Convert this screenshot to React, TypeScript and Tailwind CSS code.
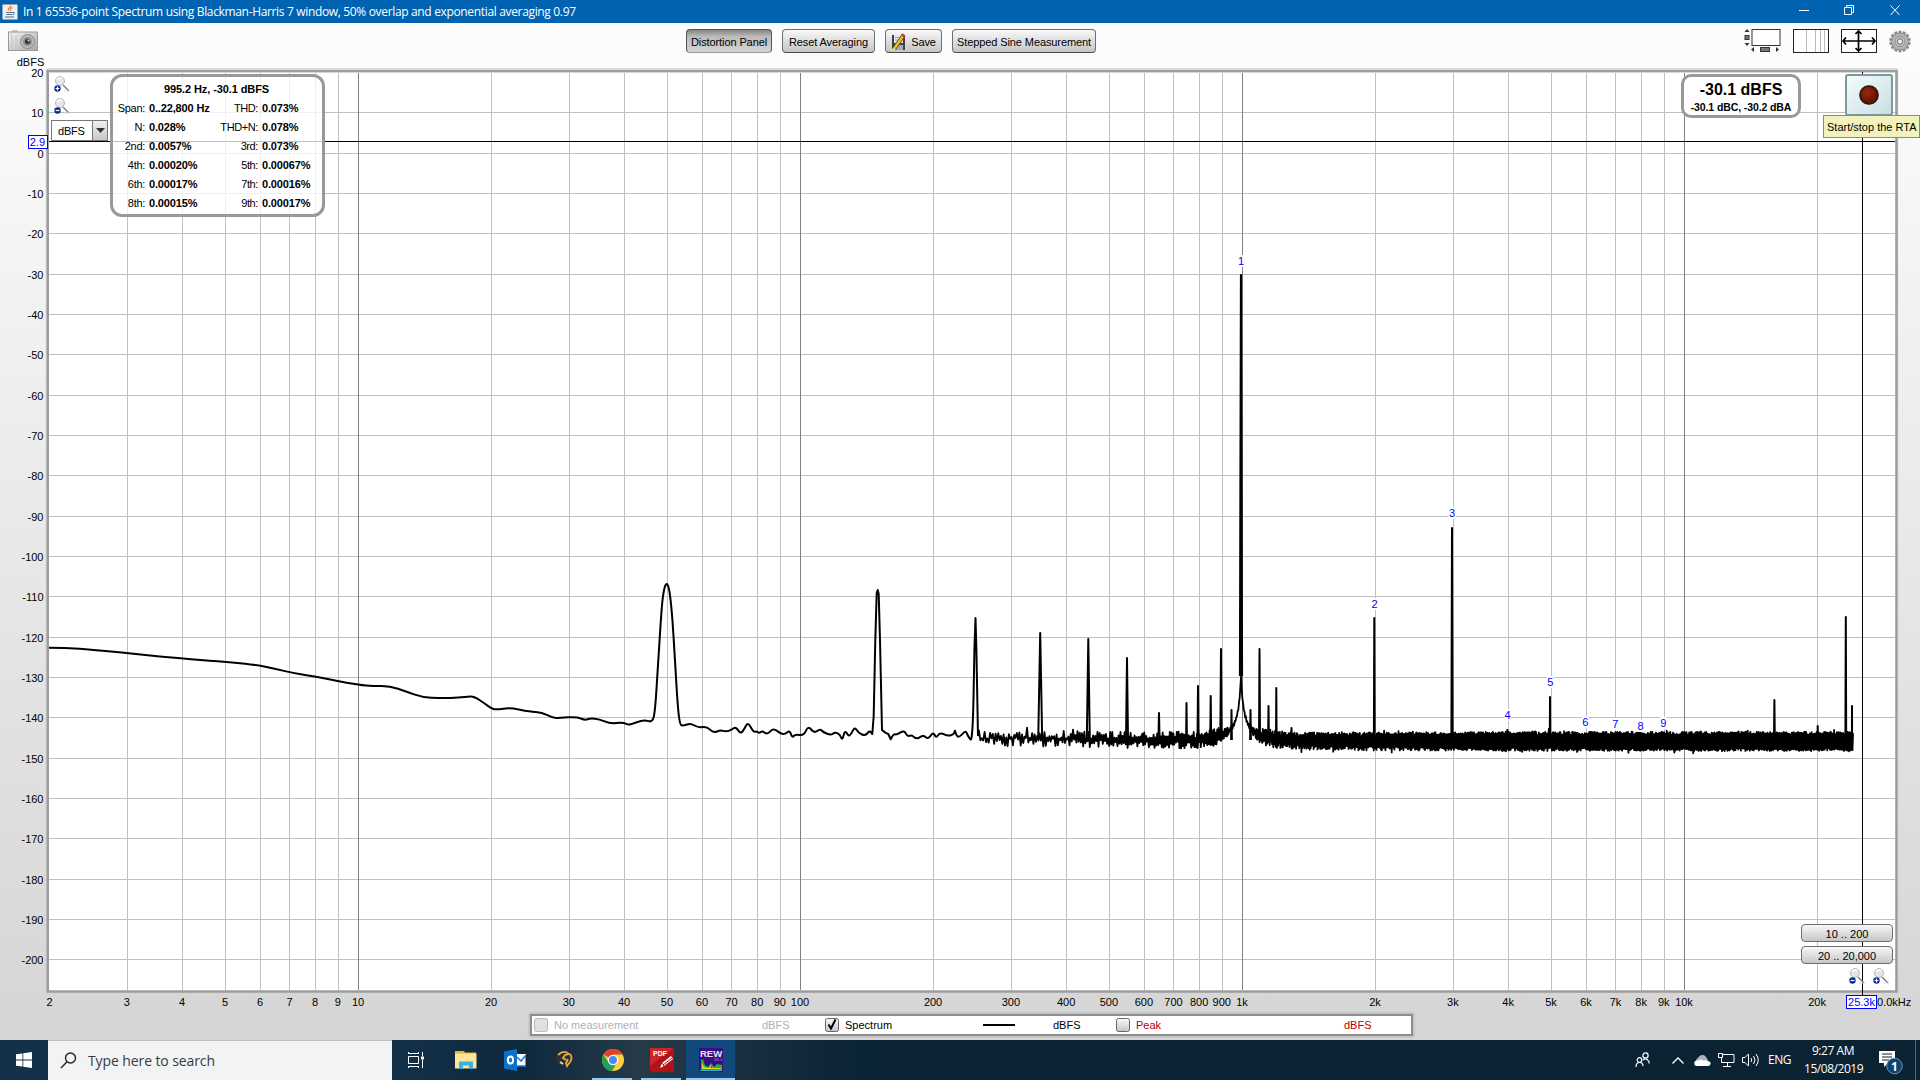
import React from 'react';

// Plot area in page pixels (the chart svg starts at y = 54)
const LEFT = 49;
const RIGHT = 1895;
const TOP = 72;
const BOTTOM = 990;
const DECADE = 442;

const freqToX = (f: number) => 358.3 + DECADE * (Math.log10(f) - 1);
const dbToY = (db: number) => 153.1 - db * 4.033;

const LOW_END: [number, number][] = [
  [49, 647.8], [66, 648], [83, 649], [122, 652.5], [159, 656.5], [202, 660.2], [233, 662.5], [257, 665], [276, 669],
  [294, 673.3], [316, 676.5], [337, 681], [359, 684.8], [373, 686], [390, 686], [406, 691.5], [422, 697.3],
  [441, 698], [459, 697.8], [470, 696.4], [475, 697], [484, 703], [491.7, 708.7], [496.7, 709.7], [510, 707.7],
  [530, 711.7], [541.7, 712.3], [553.3, 718], [560, 718], [576.7, 716.7], [585, 720.3], [590, 718.3], [599.3, 719],
  [610, 723.7], [623.3, 722.3], [629, 725.3], [636.7, 722], [645, 720], [652, 722.3], [655, 713.3], [658.3, 660],
  [661.7, 606.7], [663.5, 592], [665.2, 585.3], [666.7, 583.8], [668.2, 585.3], [670, 594], [672.3, 616.7],
  [675, 660], [677.7, 706.7], [680, 725],
  [683.3, 725.7], [690.7, 723.3], [698.3, 727.7], [706.7, 726.3], [713.3, 733], [720.7, 730], [725.7, 731.7],
  [731.7, 730], [735.7, 726.7], [740.7, 734], [744, 729.3], [748, 722], [753.3, 732], [756.7, 731.3], [759.3, 733.3],
  [762.3, 730.7], [767.3, 734.7], [773.3, 728], [780.7, 733.7], [785, 734.3], [789.7, 730.3], [792.3, 738],
  [795, 734.3], [804, 735.7], [808, 725.7], [814.3, 733.3], [820, 728.7], [823.3, 732.3], [831, 735.3], [834.7, 732],
  [840, 734.3], [842.3, 740.7], [845, 730], [848.3, 736], [851, 734.7], [854.7, 726.7], [858.3, 733], [865.7, 736],
  [869.3, 730.3], [872.3, 734], [873.7, 716], [875.3, 640], [876.7, 593], [877.7, 590], [878.7, 594], [880, 640],
  [882, 730], [885, 732.7], [888.3, 734], [890.7, 739.3], [893.3, 734], [896.7, 734.7], [904.3, 730], [907.3, 736.7],
  [911.7, 735], [916.7, 739.3], [923.3, 735], [928.3, 739.3], [933.3, 731.7], [936, 738.3], [940, 732.3],
  [947.3, 736], [953.3, 735], [955, 730.7], [956.7, 737.3], [961, 736], [965.7, 730], [968.3, 737.3], [972.7, 741.7],
  [974.4, 650], [975.5, 618], [976.4, 650], [978, 736],
];

// x, top, half width at the base
const PEAKS: [number, number, number][] = [
  [1040.2, 633, 2], [1088.3, 639, 1.5], [1127, 658, 1], [1159, 713, 0.6], [1186.5, 703, 0.4], [1198, 686, 0.5],
  [1210.7, 696, 0.5], [1221, 649, 0.7], [1231.5, 710, 0.4], [1250.5, 710, 0.4], [1259.5, 649, 0.5], [1268.5, 706, 0.4],
  [1276.3, 688, 0.3], [1291.5, 728, 0.4], [1374.3, 618, 0.4], [1452, 528, 0.6], [1507.3, 730, 0.2], [1550, 697, 0.2],
  [1774.4, 700, 0.4], [1817.7, 726, 0.2], [1845.8, 617, 0.4], [1852, 706, 0.1],
];

const HARMONICS: [string, number, number][] = [
  ['1', 1241, 261], ['2', 1374.5, 604], ['3', 1452, 513], ['4', 1507.5, 715], ['5', 1550.3, 682], ['6', 1585.3, 722],
  ['7', 1615.3, 724], ['8', 1640.5, 726], ['9', 1663.3, 723],
];

function smoothPath(pts: [number, number][]) {
  let d = `M${pts[0][0]} ${pts[0][1]}`;
  for (let i = 1; i < pts.length - 1; i++) {
    const mx = (pts[i][0] + pts[i + 1][0]) / 2;
    const my = (pts[i][1] + pts[i + 1][1]) / 2;
    const tight = pts[i][0] > 870 && pts[i + 1][0] - pts[i - 1][0] < 6;
    d += tight ? `L${pts[i][0]} ${pts[i][1]}` : `Q${pts[i][0]} ${pts[i][1]} ${mx} ${my}`;
  }
  const last = pts[pts.length - 1];
  return `${d}L${last[0]} ${last[1]}`;
}

function noisePath() {
  let seed = 4711;
  const rand = () => {
    seed = (seed * 16807) % 2147483647;
    return seed / 2147483647;
  };
  let d = 'M978 736';
  let up = true;
  let x = 979;
  while (x < 1853) {
    const t = Math.min(1, (x - 979) / 700);
    const dist = Math.abs(x - 1241);
    const skirt = Math.max(0, 70 / (1 + 0.35 * dist) - 4);
    const center = 738.3 + 3 * Math.min(1, t * 1.8) - skirt;
    const amp = Math.min(8 + 1.6 * Math.min(1, t * 1.3), 0.6 + dist * 0.35);
    const spread = 1.15 - 0.8 * Math.min(1, t * 1.5);
    let off = amp * (1 - spread * rand());
    if (rand() > 0.95 && dist > 12) off += 3 * rand();
    d += `L${x.toFixed(1)} ${(center + (up ? -off : off)).toFixed(1)}`;
    up = !up;
    x += 1.4 - 0.95 * Math.min(1, t * 2);
  }
  return d;
}

const LOW_PATH = smoothPath(LOW_END);
const NOISE_PATH = noisePath();

const X_TICKS: number[] = [];
[1, 10, 100, 1000, 10000].forEach((base) => {
  for (let n = 1; n < 10; n++) {
    const f = base * n;
    if (f > 2 && f <= 20000) X_TICKS.push(f);
  }
});
const Y_TICKS = Array.from({ length: 23 }, (_, i) => 20 - i * 10);

const tickLabel = (f: number) => (f >= 1000 ? `${f / 1000}k` : `${f}`);

const Chart: React.FC = () => (
  <svg
    width="1920"
    height="957"
    viewBox="0 54 1920 957"
    className="block font-['Liberation_Sans'] text-[11px]"
  >
    {/* Bevelled frame */}
    <rect x="46.5" y="69" width="1851" height="923.5" rx="2" fill="none" stroke="#d0d0d0" strokeWidth="1.5" />
    <rect x="47.8" y="71.2" width="1848.600" height="920.3" fill="#fff" stroke="#9c9c9c" strokeWidth="2.4" />
    <g shapeRendering="crispEdges">
      {Y_TICKS.slice(1).map((db) => (
        <rect key={db} x={LEFT} y={Math.floor(dbToY(db))} width={RIGHT - LEFT} height="1" fill="#bfbfbf" />
      ))}
      {X_TICKS.map((f) => (
        <rect
          key={f}
          x={Math.floor(freqToX(f))}
          y={TOP + 1}
          width="1"
          height={BOTTOM - TOP - 1}
          fill={[10, 100, 1000, 10000].includes(f) ? '#808080' : '#bfbfbf'}
        />
      ))}
      {/* Cursor */}
      <rect x={LEFT} y="141" width={RIGHT - LEFT} height="1" fill="#000" />
      <rect x="1862" y={TOP} width="1" height="923" fill="#000" />
    </g>

    <g fill="none" stroke="#000" strokeWidth="2" strokeLinejoin="round">
      <path d={LOW_PATH} />
      <path d={NOISE_PATH} strokeWidth="1.8" />
      {PEAKS.map(([x, y, w]) => (
        <path key={x} d={`M${x - w} 740L${x} ${y}L${x + w} 740`} />
      ))}
      <path d="M1240 676L1241 275L1242 676" strokeWidth="2.2" />
    </g>

    {HARMONICS.map(([n, x, y]) => (
      <g key={n}>
        <rect x={x - 3.5} y={y - 6} width="7" height="12" fill="#fff" />
        <text x={x} y={y + 4} textAnchor="middle" fill="#0000ff">{n}</text>
      </g>
    ))}

    <text x="30.5" y="66" textAnchor="middle">dBFS</text>
    {Y_TICKS.map((db) => (
      <text key={db} x="43.5" y={dbToY(db) + 4.5} textAnchor="end">{db}</text>
    ))}
    <text x="49.5" y="1006" textAnchor="middle">2</text>
    {X_TICKS.map((f) => (
      <text key={f} x={freqToX(f) - 0.3} y="1006" textAnchor="middle">{tickLabel(f)}</text>
    ))}
    <text x="1877" y="1006">0.0kHz</text>
    <rect x="28.5" y="135.5" width="19" height="13" fill="#fff" stroke="#0000ff" />
    <text x="37.5" y="146" textAnchor="middle" fill="#0000ff">2.9</text>
    <rect x="1846.5" y="995.5" width="30" height="13" fill="#fff" stroke="#0000ff" />
    <text x="1861.5" y="1006" textAnchor="middle" fill="#0000ff">25.3k</text>
  </svg>
);

const Magnifier: React.FC<{ plus?: boolean }> = ({ plus }) => (
  <svg width="16" height="16" viewBox="0 0 16 16">
    <path d="M9 9l6 6" stroke="#777" strokeWidth="1.2" />
    <path d="M10 15h6" stroke="#ddd" strokeWidth="1" />
    <circle cx="6" cy="5" r="4.5" fill="#e6e6ea" stroke="#b8b8bc" />
    <path d="M3 4a3.5 3.5 0 0 1 5-1.5" stroke="#fff" strokeWidth="1.5" fill="none" />
    <circle cx="3.5" cy="12.5" r="3.2" fill="#00308f" />
    <path d={plus ? 'M1.6 12.5h3.8M3.5 10.6v3.8' : 'M1.6 12.5h3.8'} stroke="#fff" strokeWidth="1.2" />
  </svg>
);

const JavaIcon: React.FC = () => (
  <svg width="16" height="16" viewBox="0 0 16 16">
    <rect x=".5" y=".5" width="15" height="15" rx="1" fill="#eef0f2" stroke="#9aa4ae" />
    <path d="M8.5 1.5c1 2-3.5 2.5-2 5M10.5 3.5c-2 1-3 1.5-2 3.5" stroke="#e77a22" strokeWidth="1.2" fill="none" />
    <path d="M4 8.5h7M4.5 10.5h6M3 13h9M11 8.5c2-.5 2 1.5 0 2.2" stroke="#4a7597" fill="none" />
  </svg>
);

const CameraIcon: React.FC = () => (
  <svg width="31" height="22" viewBox="0 0 31 22">
    <defs>
      <linearGradient id="cam" x1="0" y1="0" x2="1" y2="1">
        <stop offset="0" stopColor="#f4f4f4" />
        <stop offset="1" stopColor="#a8a8a8" />
      </linearGradient>
    </defs>
    <rect x="4" y="0" width="6" height="3" fill="#ccc" />
    <rect x=".5" y="2" width="29" height="18.5" fill="url(#cam)" stroke="#999" />
    <path d="M3 3q3 9 0 16M8 5v10" stroke="#c4c4c4" fill="none" />
    <circle cx="19.5" cy="11.5" r="7" fill="#bbb" stroke="#888" />
    <circle cx="19.5" cy="11.5" r="4.5" fill="#8a8a8a" />
    <circle cx="19.5" cy="11.5" r="2.5" fill="#333" />
    <circle cx="20.5" cy="10.5" r="1" fill="#ddd" />
  </svg>
);

const SaveIcon: React.FC = () => (
  <svg width="16" height="20" viewBox="0 0 16 20">
    <path d="M1 3h13v15H3l-2-2z" fill="#3c4248" />
    <rect x="3" y="3" width="9" height="8" fill="#dfe8ee" />
    <path d="M4 5.5h7M4 8h7" stroke="#9ab" />
    <rect x="5" y="13" width="7" height="5" fill="#aab" />
    <path d="M3 17L12 4" stroke="#6b4a00" strokeWidth="4" />
    <path d="M3 17L12 4" stroke="#f0c020" strokeWidth="2.4" />
    <path d="M11.5 4.5l1.5-2" stroke="#e03030" strokeWidth="4" />
    <path d="M1.500 19l1-3 2 1.5z" fill="#eed" />
  </svg>
);

const GearIcon: React.FC = () => (
  <svg width="22" height="23" viewBox="-11 -11.5 22 23">
    {Array.from({ length: 14 }, (_, i) => (
      <rect key={i} x="-1.5" y="-10.8" width="3" height="4" fill="#8f8f8f" transform={`rotate(${(i * 360) / 14})`} />
    ))}
    <circle r="8.6" fill="#b4b4b4" stroke="#888" />
    <circle r="5" fill="#c9c9c9" stroke="#8d8d8d" />
    <circle r="2.6" fill="#f4f4f4" stroke="#808080" strokeWidth="1.2" />
  </svg>
);

const btn =
  'flex h-6 items-center justify-center rounded-[4px] border border-[#6e6e6e] border-b-[#4a4a4a] bg-gradient-to-b from-[#f8f8f8] to-[#c6c6c6] pt-[2px] tracking-[-0.1px] whitespace-nowrap';

const Toolbar: React.FC = () => (
  <div className="flex h-[31px] items-start pt-[6px]">
    <div className="w-[686px] pt-px pl-2"><CameraIcon /></div>
    <div className="flex gap-[10px]">
      <div className="flex h-6 w-[86px] items-center justify-center rounded-[4px] border border-[#555] border-b-[#999] bg-gradient-to-b from-[#858585] via-[#bcbcbc] via-30% to-[#d4d4d4] pt-[2px] tracking-[-0.1px] whitespace-nowrap">
        Distortion Panel
      </div>
      <div className={`${btn} w-[93px]`}>Reset Averaging</div>
      <div className={`${btn} w-[57px] gap-1`}><SaveIcon />Save</div>
      <div className={`${btn} w-[144px]`}>Stepped Sine Measurement</div>
    </div>
    <div className="ml-auto flex items-start gap-3 pr-[9px]">
      <svg width="37" height="24" viewBox="0 0 37 24">
        <rect x="8" y=".5" width="28" height="16" fill="#fff" stroke="#333" />
        <rect x="1" y="6.5" width="4" height="4" fill="#777" stroke="#333" />
        <path d="M.5 3h5L3 0zM.5 14h5L3 17zM7 20.5l3-2.5v5zM35 20.5l-3-2.5v5z" fill="#333" />
        <rect x="16.5" y="18.5" width="9" height="4" fill="#777" stroke="#333" />
      </svg>
      <svg width="36" height="24" viewBox="0 0 36 24">
        <rect x=".5" y=".5" width="35" height="23" fill="#fff" stroke="#222" />
        <path d="M13.5 1v22M22.5 1v22M27.5 1v22M31.5 1v22" stroke="#bbb" />
      </svg>
      <svg width="36" height="24" viewBox="0 0 36 24">
        <rect x=".5" y=".5" width="35" height="23" fill="#fff" stroke="#222" />
        <path d="M2 12h32M17.5 2v20M5 8.5L2 12l3 3.5M31 8.5l3 3.5-3 3.5M14.5 5l3-3 3 3M14.5 19l3 3 3-3" stroke="#000" strokeWidth="1.7" fill="none" />
      </svg>
      <div className="pt-px"><GearIcon /></div>
    </div>
  </div>
);

const DISTORTION = [
  ['Span:', '0..22,800 Hz', 'THD:', '0.073%'],
  ['N:', '0.028%', 'THD+N:', '0.078%'],
  ['2nd:', '0.0057%', '3rd:', '0.073%'],
  ['4th:', '0.00020%', '5th:', '0.00067%'],
  ['6th:', '0.00017%', '7th:', '0.00016%'],
  ['8th:', '0.00015%', '9th:', '0.00017%'],
];

const DistortionPanel: React.FC = () => (
  <div className="absolute top-[51px] left-[110px] h-[143px] w-[215px] rounded-[12px] border-[3px] border-[#999] bg-white/75 pt-[3px]">
    <div className="h-[19px] pr-[2px] text-center leading-[19px] font-bold tracking-[-0.1px]">995.2 Hz, -30.1 dBFS</div>
    {DISTORTION.map((row) => (
      <div key={row[0]} className="grid h-[19px] grid-cols-[32px_54px_51px_56px] gap-x-1 leading-[19px] tracking-[-0.15px] whitespace-nowrap">
        <span className="flex justify-end tracking-[-0.3px]">{row[0]}</span>
        <span className="font-bold">{row[1]}</span>
        <span className="flex justify-end tracking-[-0.4px]">{row[2]}</span>
        <span className="font-bold">{row[3]}</span>
      </div>
    ))}
  </div>
);

const CheckBox: React.FC<{ checked?: boolean; disabled?: boolean }> = ({ checked, disabled }) => (
  <svg width="14" height="14" viewBox="0 0 14 14" opacity={disabled ? 0.45 : 1}>
    <defs>
      <linearGradient id="chk" x1="0" y1="0" x2="0" y2="1">
        <stop offset="0" stopColor="#fafafa" />
        <stop offset="1" stopColor="#c4c4c8" />
      </linearGradient>
    </defs>
    <rect x=".5" y=".5" width="13" height="13" rx="2" fill={disabled ? '#bbb' : 'url(#chk)'} stroke="#666" />
    {checked && <path d="M3.5 6.5l2.5 4 4.5-9" stroke="#000" strokeWidth="2" fill="none" />}
  </svg>
);

const Legend: React.FC = () => (
  <div className="ml-[530px] flex h-[22px] w-[883px] items-center border-2 border-[#8e8e8e] bg-white pl-[2px] shadow-[0_0_2px_1px_#b8b8b8]">
    <CheckBox disabled />
    <span className="w-[214px] pt-px pl-[6px] text-[#b0b0b0]">No measurement</span>
    <span className="w-[63px] pt-px text-[#b0b0b0]">dBFS</span>
    <CheckBox checked />
    <span className="w-[144px] pt-px pl-[6px]">Spectrum</span>
    <span className="h-[2px] w-8 bg-black" />
    <span className="w-[101px] pt-px pl-[38px]">dBFS</span>
    <CheckBox />
    <span className="w-[214px] pt-px pl-[6px] text-[#b40000]">Peak</span>
    <span className="pt-px text-[#b40000]">dBFS</span>
  </div>
);

const TitleBar: React.FC = () => (
  <div className="flex h-[23px] items-center bg-[#0063b1] font-['Open_Sans'] text-[12px] text-white">
    <div className="pl-[2px]"><JavaIcon /></div>
    <span className="pt-px pl-[5px] tracking-[-0.34px] whitespace-nowrap">
      In 1 65536-point Spectrum using Blackman-Harris 7 window, 50% overlap and exponential averaging 0.97
    </span>
    <svg className="ml-auto" width="126" height="23" viewBox="0 0 126 23" fill="none" stroke="#fff">
      <path d="M5 10.5h10M50.5 7.5h7v7h-7zM52.5 7.5v-2h7v7h-2M96.5 5.5l9 9.5M105.5 5.5l-9 9.5" />
    </svg>
  </div>
);

const TaskApp: React.FC<{ children: React.ReactNode; running?: boolean; active?: boolean }> = ({ children, running, active }) => (
  <div className={`relative flex h-10 w-[49px] items-center justify-center ${active ? 'bg-[#12497c]' : ''}`}>
    {children}
    {running && <div className="absolute bottom-0 left-[4px] h-[2px] w-10 bg-[#9acbf0]" />}
    {active && <div className="absolute bottom-0 left-0 h-[2px] w-full bg-[#9acbf0]" />}
  </div>
);

const TaskBar: React.FC = () => (
  <div className="flex h-10 items-center bg-[linear-gradient(90deg,#14314b_0,#14314b_392px,#0e283c_520px,#263a48_640px,#182e3e_750px,#0b2436_850px,#0b2233_100%)] font-['Open_Sans'] text-white">
    <div className="flex w-12 justify-center">
      <svg width="16" height="16" viewBox="0 0 16 16" fill="#fff">
        <path d="M0 2.3L6.5 1.4v6.2H0zM7.3 1.3L16 0v7.6H7.3zM0 8.4h6.5v6.2L0 13.7zM7.3 8.4H16V16l-8.7-1.3z" />
      </svg>
    </div>
    <div className="flex h-10 w-[344px] items-center border-t border-[#c0c0c0] bg-[#f2f3f5] pl-3 text-[#3a3a3a]">
      <svg width="17" height="17" viewBox="0 0 17 17" fill="none" stroke="#222" strokeWidth="1.4">
        <circle cx="10.5" cy="6" r="5" />
        <path d="M7 9.7L1 16" />
      </svg>
      <span className="pl-[11px] text-[14px] tracking-[-0.1px]">Type here to search</span>
    </div>
    <TaskApp>
      <svg className="-ml-[2px]" width="17" height="16" viewBox="0 0 17 16" fill="none" stroke="#fff">
        <path d="M1 1.5h11M1 14.5h11M1.5 0v2M11.5 0v2M1.5 16v-2M11.5 16v-2M1.5 4.5h10v7h-10zM15.5 0v4M15.5 8v8" />
        <rect x="14.5" y="5" width="2" height="2" fill="#fff" />
      </svg>
    </TaskApp>
    <TaskApp>
      <svg className="ml-px" width="22" height="18" viewBox="0 0 22 18">
        <path d="M0 0h9l1 1.5h11V5H0z" fill="#f0b429" />
        <path d="M0 2.5h21.5v15H0z" fill="#ffe596" />
        <path d="M4 18v-7.5h14V18h-4v-3.5H8V18z" fill="#3ab0e8" />
      </svg>
    </TaskApp>
    <TaskApp>
      <svg className="ml-px" width="22" height="22" viewBox="0 0 22 22">
        <rect x="12" y="5" width="10" height="12" fill="#fff" />
        <path d="M13 8l4 4 5-6M13 17h9V6" stroke="#1a7fd4" strokeWidth="1.6" fill="none" />
        <path d="M0 2.5L13 0v22L0 19.5z" fill="#0a72c8" />
        <ellipse cx="6.5" cy="11" rx="2.6" ry="3.6" fill="none" stroke="#fff" strokeWidth="2" />
      </svg>
    </TaskApp>
    <TaskApp>
      <svg className="ml-[2px]" width="20" height="20" viewBox="0 0 20 20">
        <ellipse cx="10" cy="9" rx="9" ry="7" fill="#2f302e" />
        <path d="M3 5q4-4 8-3l3 2-4 1-2 3 3 2M15 4q3 4 0 8l-3 4-1-3 2-4" stroke="#e0ac50" strokeWidth="1.8" fill="none" />
        <path d="M5 12l3 2" stroke="#f0d8a0" strokeWidth="2" />
      </svg>
    </TaskApp>
    <TaskApp running>
      <svg className="ml-px" width="22" height="22" viewBox="0 0 22 22">
        <circle cx="11" cy="11" r="11" fill="#ffcd40" />
        <path d="M11 11L1.5 5.5A11 11 0 0 1 20.5 5.5H11z" fill="#e0402f" />
        <path d="M1.5 5.5A11 11 0 0 0 10 22l5-8.5-8.7-.2z" fill="#1fa05a" />
        <circle cx="11" cy="11" r="5.2" fill="#fff" />
        <circle cx="11" cy="11" r="4" fill="#4a8af4" />
      </svg>
    </TaskApp>
    <TaskApp running>
      <svg className="ml-px" width="24" height="24" viewBox="0 0 24 24">
        <rect width="24" height="24" rx="2" fill="#b01218" />
        <path d="M0 0h24L0 18z" fill="#c8262a" />
        <text x="3" y="7.5" fill="#fff" className="font-['Liberation_Sans'] text-[7px] font-bold">PDF</text>
        <path d="M10 20l2-5 9-7 2 3-9 7z" fill="#fff" />
        <path d="M13 17l9-7M12 15l2 3" stroke="#b01218" />
      </svg>
    </TaskApp>
    <TaskApp active>
      <svg width="24" height="24" viewBox="0 0 24 24">
        <rect width="24" height="24" fill="#3a0c86" />
        <text x="1" y="9" fill="#e8e4f4" className="font-['Liberation_Sans'] text-[9.5px] font-bold">REW</text>
        <text x="15" y="13" fill="#b8a8e0" className="font-['Liberation_Sans'] text-[4px]">V5.1</text>
        <path d="M2 22V12l2-1 2 6 3 2 3-4 3 4 3-3 5 1v5z" fill="#1faf3c" />
        <path d="M3 21v-6l2 4 4 1 3-3 3 3h7v1z" fill="#e8d820" />
        <path d="M11 20l1.5-3 1.5 3z" fill="#e03020" />
        <path d="M1 22.5h22" stroke="#20b8d8" />
      </svg>
    </TaskApp>

    {/* Tray */}
    <div className="ml-auto flex h-10 items-center text-[12px]">
      <svg width="15" height="16" viewBox="0 0 15 16" fill="none" stroke="#fff" strokeWidth="1.2">
        <circle cx="10.5" cy="3.5" r="2.6" />
        <circle cx="4.5" cy="8" r="2.3" />
        <path d="M1 15q0-4.5 3.5-4.5T8 14M8 8q2.5-3 6 1.5v2" />
      </svg>
      <svg className="ml-[22px]" width="12" height="7" viewBox="0 0 12 7" fill="none" stroke="#fff" strokeWidth="1.3">
        <path d="M.5 6.5L6 1l5.5 5.5" />
      </svg>
      <svg className="ml-[10px]" width="17" height="11" viewBox="0 0 17 11">
        <path d="M3 8a3 3 0 0 1 1-5 4.5 4.5 0 0 1 8-1l2 3-8 4z" fill="#aab3ba" />
        <path d="M3 11a2.7 2.7 0 0 1 0-5.4L8 4.5l2 1.5a3 3 0 0 1 4 0q3 .5 2.5 3-.5 2-2.5 2z" fill="#fff" />
      </svg>
      <svg className="ml-[7px]" width="17" height="14" viewBox="0 0 17 14" fill="none" stroke="#fff">
        <path d="M5 1.5h11v8H3.5V5M.5.5h4v4h-4zM9.5 10v3M5 13.5h8" />
      </svg>
      <svg className="ml-[7px]" width="17" height="14" viewBox="0 0 17 14" fill="none" stroke="#fff">
        <path d="M.5 4.5h2.5l3.5-3.5v12l-3.5-3.500H.5zM9 5q1.5 2 0 4M11.5 3q3 4 0 8M14 1q4.5 6 0 12" />
      </svg>
      <span className="ml-[9px] w-[25px] tracking-[-0.5px]">ENG</span>
      <div className="ml-[11px] w-[58px] text-center text-[12px] leading-[18px] tracking-[-0.45px] whitespace-nowrap">
        <div>9:27 AM</div>
        <div>15/08/2019</div>
      </div>
      <svg className="mt-[5px] ml-[17px]" width="25" height="25" viewBox="0 0 25 25">
        <path d="M0 1h16v12H9l-4 4v-4H0z" fill="#fff" />
        <path d="M3 4h10M3 7h10M3 10h7" stroke="#0b2233" />
        <circle cx="15.5" cy="16" r="7.8" fill="#0a4270" stroke="#6f94b0" />
        <text x="12" y="20.5" fill="#fff" className="font-['Open_Sans'] text-[12px] font-bold">1</text>
      </svg>
      <div className="mr-1 ml-[11px] h-10 w-px bg-[#55646f]" />
    </div>
  </div>
);

const App: React.FC = () => {
  return (
    <div className="flex h-[1080px] w-[1920px] flex-col overflow-hidden font-['Liberation_Sans',sans-serif] text-[11px] text-black">
      <TitleBar />
      <div className="relative flex-1 bg-gradient-to-b from-[#fdfdfd] to-[#d5d5d5]">
        <Toolbar />
        <Chart />
        <div className="pt-[3px]"><Legend /></div>

        {/* Controls over the plot */}
        <div className="absolute top-[53px] left-[54px] flex flex-col gap-[6px]">
          <Magnifier plus />
          <Magnifier />
        </div>
        <div className="absolute top-[97px] left-[51px] flex h-[21px] w-[57px] border border-[#777] bg-white">
          <span className="w-10 pl-[6px] leading-[20px] tracking-[-0.2px]">dBFS</span>
          <span className="flex flex-1 items-center justify-center border-l border-[#777] bg-gradient-to-b from-[#f0f0f0] to-[#c8c8c8]">
            <svg width="9" height="5" viewBox="0 0 9 5"><path d="M0 0h9L4.5 5z" fill="#333" /></svg>
          </span>
        </div>
        <DistortionPanel />
        <div className="absolute top-[51px] left-[1681px] h-[44px] w-[120px] rounded-[10px] border-[3px] border-[#999] bg-white text-center font-bold whitespace-nowrap">
          <div className="pt-[3px] text-[16px] leading-[20px]">-30.1 dBFS</div>
          <div className="text-[10.5px] leading-[15px] tracking-[-0.1px]">-30.1 dBC, -30.2 dBA</div>
        </div>
        <div className="absolute top-[51px] left-[1845px] flex h-[42px] w-[48px] items-center justify-center rounded-[3px] border-2 border-[#7d9a9e] bg-gradient-to-br from-[#f4fbfc] to-[#c9dfe3]">
          <svg width="22" height="22" viewBox="0 0 22 22">
            <defs>
              <radialGradient id="rec" cx=".4" cy=".35">
                <stop offset="0" stopColor="#9a2a10" />
                <stop offset="1" stopColor="#6a1400" />
              </radialGradient>
            </defs>
            <circle cx="11" cy="11" r="10" fill="#b4bcbc" />
            <circle cx="11" cy="11" r="9" fill="url(#rec)" stroke="#2c1410" strokeWidth="1.5" />
          </svg>
        </div>
        <div className="absolute top-[92px] left-[1823px] h-[23px] w-[97px] border border-[#8c8c78] bg-[#f2f2bd] pl-[3px] leading-[23px] whitespace-nowrap">
          Start/stop the RTA
        </div>
        <div className="absolute top-[901px] left-[1801px] flex w-[92px] flex-col gap-1">
          <div className="h-[18px] rounded-[4px] border border-[#6e6e6e] bg-gradient-to-b from-[#f8f8f8] to-[#c6c6c6] text-center leading-[18px]">10 .. 200</div>
          <div className="h-[18px] rounded-[4px] border border-[#6e6e6e] bg-gradient-to-b from-[#f8f8f8] to-[#c6c6c6] text-center leading-[18px]">20 .. 20,000</div>
          <div className="flex gap-2 pl-12">
            <Magnifier />
            <Magnifier plus />
          </div>
        </div>
      </div>
      <TaskBar />
    </div>
  );
};

export default App;
